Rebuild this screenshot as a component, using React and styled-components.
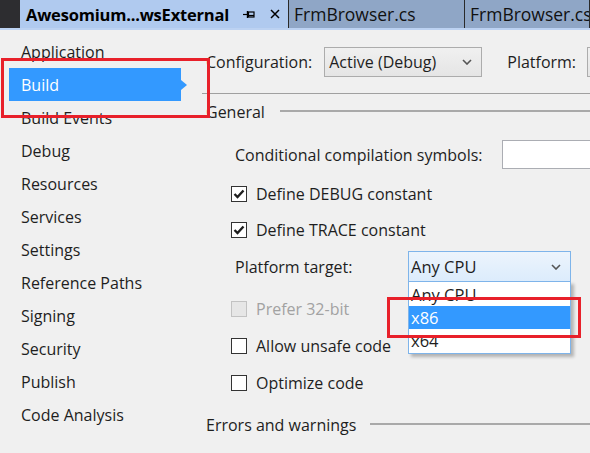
import React from 'react';
import styled, { createGlobalStyle } from 'styled-components';

const Global = createGlobalStyle`
  html, body { margin: 0; padding: 0; background: #f0f0f0; }
  body { font-family: "Open Sans", "Noto Sans", sans-serif; }
`;

const Window = styled.div`
  position: relative;
  width: 590px;
  height: 453px;
  overflow: hidden;
  background: #f0f0f0;
  color: #1e1e1e;
  font-family: "Open Sans", "Noto Sans", sans-serif;
  font-size: 16px;
  display: flex;
  flex-direction: column;
`;

const TabBar = styled.div`
  flex: none;
  display: flex;
  height: 28px;
  background: #8fa6c6;
  border-bottom: 2px solid #bcd2f2;
`;

const TabGutter = styled.div`
  width: 20px;
  background: #2d2d30;
`;

const ActiveTab = styled.div`
  width: 269px;
  flex: none;
  box-sizing: border-box;
  background: #b0caef;
  border-right: 1px solid #2a2a2a;
  display: flex;
  align-items: center;
  padding-left: 6px;
`;

const TabTitle = styled.span`
  font-weight: 700;
  font-size: 16.5px;
  color: #000;
  white-space: nowrap;
  letter-spacing: -0.2px;
`;

const TabButton = styled.span`
  display: inline-flex;
  align-items: center;
  justify-content: center;
  margin-left: ${p => p.$ml}px;
`;

const Tab = styled.div`
  width: ${p => p.$w}px;
  flex: none;
  box-sizing: border-box;
  border-right: 1px solid #2a2a2a;
  display: flex;
  align-items: center;
  padding-left: 5px;
  color: #111;
  font-size: 17.5px;
  white-space: nowrap;
  overflow: hidden;
`;

const Body = styled.div`
  flex: 1;
  display: flex;
`;

const Sidebar = styled.nav`
  width: 202px;
  flex: none;
  padding-top: 5px;
`;

const NavItem = styled.div`
  position: relative;
  height: 33px;
  width: 172px;
  margin-left: 9px;
  box-sizing: border-box;
  padding-left: 12px;
  display: flex;
  align-items: center;
  color: ${p => (p.$active ? '#fff' : '#1e1e1e')};
  background: ${p => (p.$active ? '#3399ff' : 'transparent')};
  &::after {
    content: '';
    display: ${p => (p.$active ? 'block' : 'none')};
    position: absolute;
    right: -6px;
    top: 50%;
    margin-top: -5px;
    border-left: 6px solid #3399ff;
    border-top: 5px solid transparent;
    border-bottom: 5px solid transparent;
  }
`;

const Main = styled.div`
  flex: 1;
  padding-top: 17px;
  min-width: 0;
`;

const ConfigRow = styled.div`
  display: flex;
  align-items: center;
  height: 30px;
  padding-left: 4px;
  white-space: nowrap;
`;

const ComboBox = styled.div`
  flex: none;
  width: ${p => p.$w}px;
  height: 30px;
  box-sizing: border-box;
  margin-left: ${p => p.$ml}px;
  border: 1px solid #acacac;
  background: linear-gradient(#f0f0f0, #e5e5e5);
  display: flex;
  align-items: center;
  justify-content: space-between;
  padding: 0 9px 0 4px;
`;

const Label = styled.span`
  margin-left: ${p => p.$ml || 0}px;
  white-space: nowrap;
`;

const Rule = styled.div`
  margin-top: 16px;
  height: 1px;
  background: #a0a0a0;
`;

const SectionHeader = styled.div`
  display: flex;
  align-items: center;
  height: 20px;
  margin-top: ${p => p.$mt}px;
  padding-left: 4px;
  white-space: nowrap;
`;

const SectionLine = styled.div`
  flex: 1;
  height: 2px;
  margin: -3px 0 0 ${p => p.$gap}px;
  background: #a9a9a9;
`;

const Group = styled.div`
  padding-left: 29px;
`;

const FieldRow = styled.div`
  display: flex;
  align-items: center;
  height: ${p => p.$h}px;
  margin-top: ${p => p.$mt || 0}px;
  padding-left: 4px;
`;

const FieldLabel = styled.span`
  width: ${p => p.$w}px;
  flex: none;
  white-space: nowrap;
`;

const TextInput = styled.div`
  flex: none;
  width: 120px;
  height: 29px;
  box-sizing: border-box;
  border: 1px solid #abadb3;
  background: #fff;
`;

const CheckRow = styled.div`
  display: flex;
  align-items: center;
  height: ${p => p.$h}px;
  margin-top: ${p => p.$mt || 0}px;
  color: ${p => (p.$disabled ? '#a2a2a2' : '#1e1e1e')};
`;

const Box = styled.span`
  flex: none;
  width: 16px;
  height: 16px;
  box-sizing: border-box;
  border: 1px solid ${p => (p.$disabled ? '#c2c2c2' : '#333')};
  background: ${p => (p.$disabled ? '#e6e6e6' : '#fff')};
  display: flex;
  align-items: center;
  justify-content: center;
  margin-right: 9px;
`;

const Dropdown = styled.div`
  position: relative;
  flex: none;
  width: 163px;
  height: 31px;
  box-sizing: border-box;
  border: 1px solid #7eb4ea;
  background: linear-gradient(#ecf4fc, #dcecfc);
  display: flex;
  align-items: center;
  justify-content: space-between;
  padding: 0 9px 0 2px;
  font-size: 16.5px;
`;

const DropList = styled.div`
  position: absolute;
  left: -1px;
  top: 29px;
  width: 163px;
  box-sizing: border-box;
  border: 1px solid #7eb4ea;
  background: #fff;
  box-shadow: 3px 3px 3px rgba(0, 0, 0, 0.25);
  z-index: 2;
  padding: 1px 0;
`;

const DropItem = styled.div`
  height: 23px;
  display: flex;
  align-items: center;
  padding-left: 2px;
  background: ${p => (p.$selected ? '#3399ff' : '#fff')};
  color: ${p => (p.$selected ? '#fff' : '#1e1e1e')};
`;

const Highlight = styled.div`
  position: absolute;
  left: ${p => p.$x}px;
  top: ${p => p.$y}px;
  width: ${p => p.$w}px;
  height: ${p => p.$h}px;
  box-sizing: border-box;
  border: 3px solid #e8202a;
  z-index: 5;
  pointer-events: none;
`;

const Chevron = () => (
  <svg width="10" height="6" viewBox="0 0 10 6">
    <path d="M1 1 L5 5 L9 1" fill="none" stroke="#555" strokeWidth="1.6" />
  </svg>
);

const Check = () => (
  <svg width="12" height="10" viewBox="0 0 12 10">
    <path d="M1.5 5 L4.5 8 L10.5 1.5" fill="none" stroke="#1e1e1e" strokeWidth="2.4" />
  </svg>
);

const PinIcon = () => (
  <svg width="12" height="9" viewBox="0 0 12 9">
    <path d="M0 4.5 H4" stroke="#000" strokeWidth="1.2" />
    <path d="M4.5 1 V8" stroke="#000" strokeWidth="1.4" />
    <rect x="5.5" y="2" width="5.5" height="5" fill="none" stroke="#000" strokeWidth="1.2" />
    <path d="M5.5 5.5 H11" stroke="#000" strokeWidth="1.2" />
  </svg>
);

const CloseIcon = () => (
  <svg width="10" height="10" viewBox="0 0 10 10">
    <path d="M1 1 L9 9 M9 1 L1 9" stroke="#000" strokeWidth="1.5" />
  </svg>
);

const navItems = [
  'Application', 'Build', 'Build Events', 'Debug', 'Resources', 'Services',
  'Settings', 'Reference Paths', 'Signing', 'Security', 'Publish', 'Code Analysis',
];

function CheckBox({ checked, disabled, label, h, mt }) {
  return (
    <CheckRow $h={h} $mt={mt} $disabled={disabled}>
      <Box $disabled={disabled}>{checked && <Check />}</Box>
      <span>{label}</span>
    </CheckRow>
  );
}

export default function App() {
  return (
    <>
      <Global />
      <Window>
        <TabBar>
          <TabGutter />
          <ActiveTab>
            <TabTitle>Awesomium...wsExternal</TabTitle>
            <TabButton $ml={14}><PinIcon /></TabButton>
            <TabButton $ml={15}><CloseIcon /></TabButton>
          </ActiveTab>
          <Tab $w={176}>FrmBrowser.cs</Tab>
          <Tab $w={125}>FrmBrowser.cs [</Tab>
        </TabBar>
        <Body>
          <Sidebar>
            {navItems.map(n => (
              <NavItem key={n} $active={n === 'Build'}>{n}</NavItem>
            ))}
          </Sidebar>
          <Main>
            <ConfigRow>
              <Label>Configuration:</Label>
              <ComboBox $w={158} $ml={12}>
                <span>Active (Debug)</span>
                <Chevron />
              </ComboBox>
              <Label $ml={25}>Platform:</Label>
              <ComboBox $w={120} $ml={11} />
            </ConfigRow>
            <Rule />
            <SectionHeader $mt={8}>
              <span>General</span>
              <SectionLine $gap={15} />
            </SectionHeader>
            <Group>
              <FieldRow $h={29} $mt={18}>
                <FieldLabel $w={267}>Conditional compilation symbols:</FieldLabel>
                <TextInput />
              </FieldRow>
              <CheckBox checked label="Define DEBUG constant" h={36} mt={7} />
              <CheckBox checked label="Define TRACE constant" h={36} />
              <FieldRow $h={31} $mt={3}>
                <FieldLabel $w={173}>Platform target:</FieldLabel>
                <Dropdown>
                  <span>Any CPU</span>
                  <Chevron />
                  <DropList>
                    <DropItem>Any CPU</DropItem>
                    <DropItem $selected>x86</DropItem>
                    <DropItem>x64</DropItem>
                  </DropList>
                </Dropdown>
              </FieldRow>
              <CheckBox disabled label="Prefer 32-bit" h={37} mt={8} />
              <CheckBox label="Allow unsafe code" h={37} />
              <CheckBox label="Optimize code" h={37} />
            </Group>
            <SectionHeader $mt={14}>
              <span>Errors and warnings</span>
              <SectionLine $gap={14} />
            </SectionHeader>
          </Main>
        </Body>
        <Highlight $x={1} $y={58} $w={209} $h={60} />
        <Highlight $x={387} $y={297} $w={194} $h={41} />
      </Window>
    </>
  );
}
